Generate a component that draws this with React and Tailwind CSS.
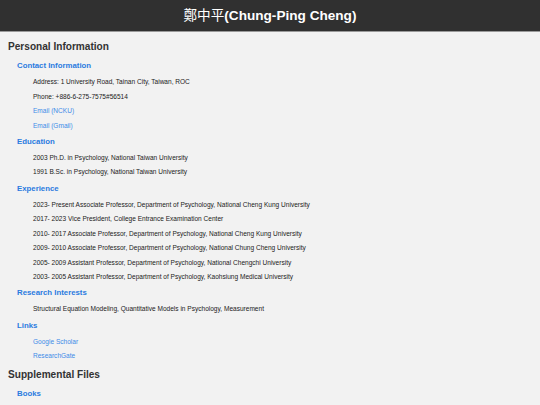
import React from 'react';

const sections = [
  {
    title: 'Contact Information',
    items: [
      { text: 'Address: 1 University Road, Tainan City, Taiwan, ROC' },
      { text: 'Phone: +886-6-275-7575#56514' },
      { text: 'Email (NCKU)', link: true },
      { text: 'Email (Gmail)', link: true },
    ],
  },
  {
    title: 'Education',
    items: [
      { text: '2003 Ph.D. in Psychology, National Taiwan University' },
      { text: '1991 B.Sc. in Psychology, National Taiwan University' },
    ],
  },
  {
    title: 'Experience',
    items: [
      { text: '2023- Present Associate Professor, Department of Psychology, National Cheng Kung University' },
      { text: '2017- 2023 Vice President, College Entrance Examination Center' },
      { text: '2010- 2017 Associate Professor, Department of Psychology, National Cheng Kung University' },
      { text: '2009- 2010 Associate Professor, Department of Psychology, National Chung Cheng University' },
      { text: '2005- 2009 Assistant Professor, Department of Psychology, National Chengchi University' },
      { text: '2003- 2005 Assistant Professor, Department of Psychology, Kaohsiung Medical University' },
    ],
  },
  {
    title: 'Research Interests',
    items: [{ text: 'Structural Equation Modeling, Quantitative Models in Psychology, Measurement' }],
  },
  {
    title: 'Links',
    items: [
      { text: 'Google Scholar', link: true },
      { text: 'ResearchGate', link: true },
    ],
  },
];

function Section({ title, items }) {
  return (
    <div className="pl-[9px]">
      <h3 className="mt-[1.75px] text-[7.8px] leading-[14px] font-bold text-[#2a7be0]">{title}</h3>
      <ul className="mt-[2px] pl-4">
        {items.map((item, i) => (
          <li key={i} className="text-[6.55px] leading-[14.5px]">
            {item.link ? (
              <a href="#" className="text-[#3d8be8]">{item.text}</a>
            ) : (
              <span className="text-[#222]">{item.text}</span>
            )}
          </li>
        ))}
      </ul>
    </div>
  );
}

export default function App() {
  return (
    <div className="min-h-[405px] bg-[#f2f2f2] font-['Liberation_Sans',Arial,'Noto_Sans_CJK_TC',sans-serif]">
      <header className="h-[32px] bg-[#303030] border-b border-[#9a9a9a] flex items-center justify-center">
        <h1 className="mt-[1px] text-[13.6px] font-bold text-white">
          <span className="font-normal">鄭中平</span>(Chung-Ping Cheng)
        </h1>
      </header>
      <main className="px-2">
        <h2 className="mt-[6.5px] text-[10.1px] leading-[16px] font-bold text-[#333]">Personal Information</h2>
        <div className="mt-[4.5px]">
          {sections.map((s) => (
            <Section key={s.title} {...s} />
          ))}
        </div>
        <h2 className="mt-[3px] text-[10.1px] leading-[16px] font-bold text-[#333]">Supplemental Files</h2>
        <div className="pl-[9px]">
          <h3 className="mt-[4.5px] text-[7.8px] leading-[14px] font-bold text-[#2a7be0]">Books</h3>
        </div>
      </main>
    </div>
  );
}
